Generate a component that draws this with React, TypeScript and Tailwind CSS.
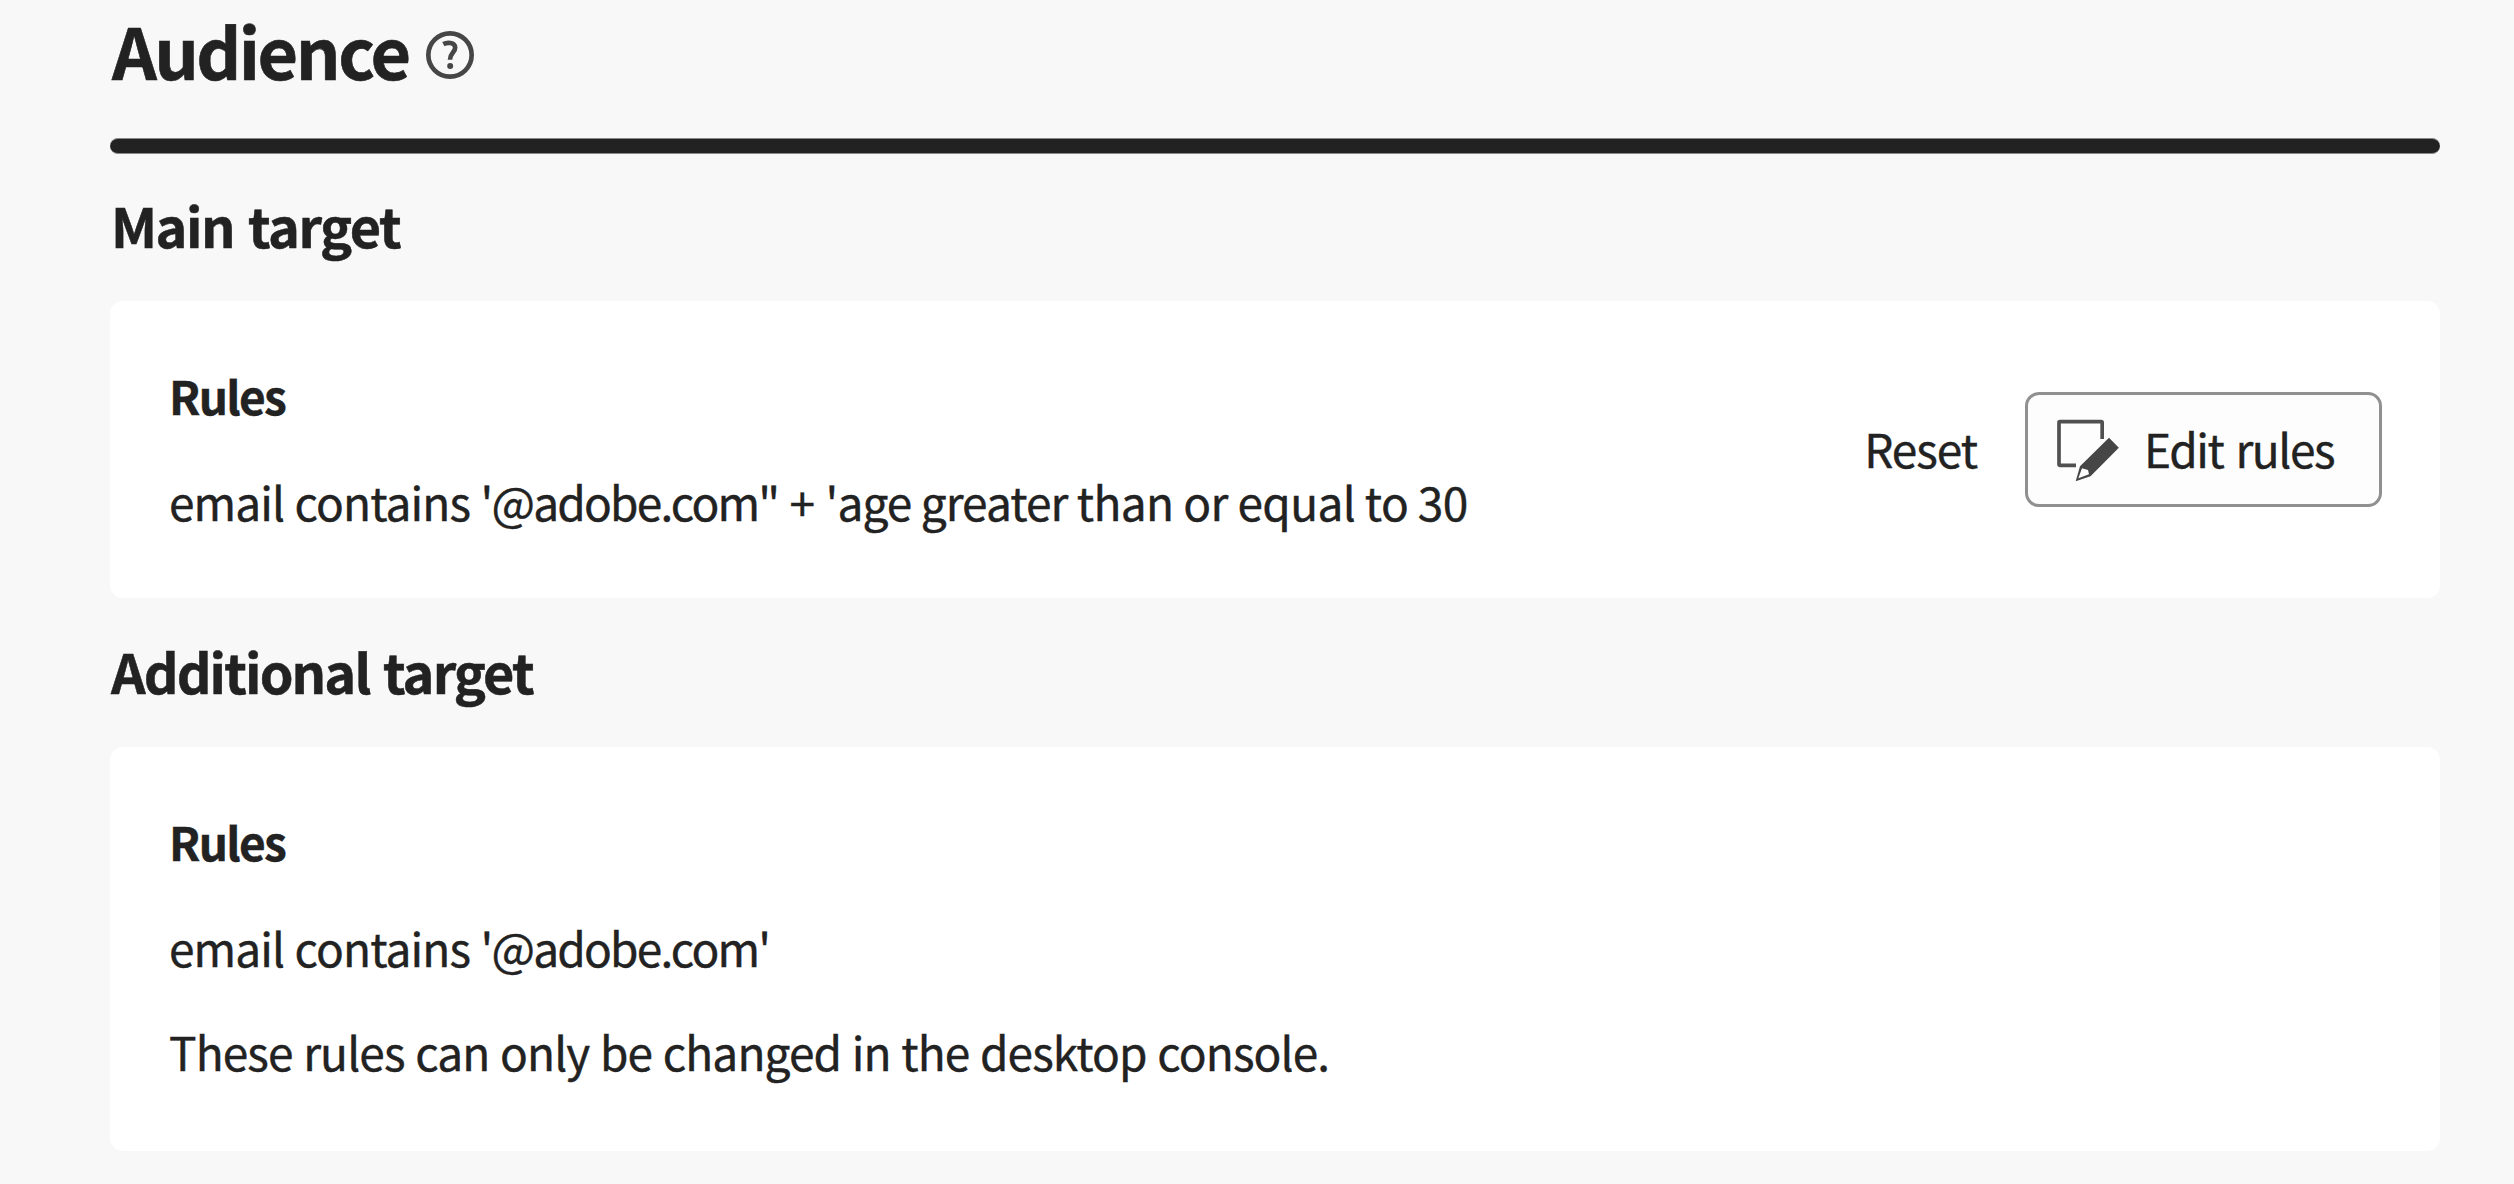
import type { ReactNode } from "react";

function HelpIcon() {
  return (
    <svg viewBox="14 29 150 150" className="mt-[9px] ml-4 h-[50px] w-[50px]" fill="none" stroke="#464646">
      <circle cx="89" cy="104" r="65" strokeWidth="14" />
      <path d="M69 71.5C80 65.5 104 65 104.500 81.500C105 96 89 98 89 118" strokeWidth="14" />
      <circle cx="89.500" cy="137" r="9" fill="#464646" stroke="none" />
    </svg>
  );
}

function EditIcon() {
  return (
    <svg viewBox="48 54 192 192" className="h-16 w-16 shrink-0" fill="#464646">
      <path
        d="M186.500 117V68Q186.500 65 183.500 65H60Q57 65 57 68V193Q57 196 60 196H108"
        fill="none"
        stroke="#505050"
        strokeWidth="11"
      />
      <path
        fillRule="evenodd"
        d="M207 113.500L236.500 143.500L151.500 229L107 243.500L120 199ZM126 205L115 234.500L147 223L144 210Z"
      />
    </svg>
  );
}

function Card({ children, className }: { children: ReactNode; className: string }) {
  return <div className={`mt-[46px] flex justify-between rounded-[13px] bg-white px-[58px] pt-16 ${className}`}>{children}</div>;
}

function RulesTitle() {
  return <h3 className="pl-[1px] font-bold tracking-[-1.7px]">Rules</h3>;
}

const body = "text-[46px] leading-[60px] whitespace-nowrap [-webkit-text-stroke:0.4px_#222222]";

export default function App() {
  return (
    <main className="h-[1184px] w-[2514px] overflow-hidden bg-[#f8f8f8] pt-[10px] pr-[74px] pl-[110px] font-['Noto_Sans_CJK_SC',sans-serif] text-[#222222]">
      <header className="flex h-20 items-center pl-[2px]">
        <h1 className="text-[70px] leading-[80px] font-bold tracking-[-2.5px] [-webkit-text-stroke:0.6px_#222222]">Audience</h1>
        <HelpIcon />
      </header>
      <div className="mt-12 h-4 rounded-full border-y border-[#8a8a8a] bg-[#222222]" />

      <section>
        <h2 className="mt-[41px] pl-[1px] text-[54px] leading-[60px] font-bold tracking-[-1.45px] [word-spacing:3px] [-webkit-text-stroke:0.5px_#222222]">
          Main target
        </h2>
        <Card className="h-[297px]">
          <div className={body}>
            <RulesTitle />
            <p className="mt-[46px] pl-[1px]">
              <span className="tracking-[-0.9px] [word-spacing:1px]">email contains </span>
              <span className="tracking-[-1.79px]">'@adobe.com"</span>
              <span className="tracking-[-0.62px] [word-spacing:1.5px]"> + </span>
              <span className="tracking-[-0.93px]">'age greater </span>
              <span className="tracking-[-0.62px]">than or equal to 30</span>
            </p>
          </div>
          <div className={`mt-[27px] flex h-[115px] items-center ${body}`}>
            <button className="mr-[48px] pb-1 tracking-[-1.05px]">Reset</button>
            <button className="flex h-[115px] w-[357px] items-center rounded-[14px] border-[3px] border-[#909090] bg-[#fdfdfd] pl-[28px]">
              <EditIcon />
              <span className="ml-6 pb-1 tracking-[-1.4px] [word-spacing:3px]">Edit rules</span>
            </button>
          </div>
        </Card>
      </section>

      <section>
        <h2 className="mt-[43px] pl-[1px] text-[54px] leading-[60px] font-bold tracking-[-1.85px] [word-spacing:3px] [-webkit-text-stroke:0.5px_#222222]">
          Additional target
        </h2>
        <Card className="h-[404px]">
          <div className={body}>
            <RulesTitle />
            <p className="mt-[46px] pl-[1px]">
              <span className="tracking-[-0.9px] [word-spacing:1px]">email contains </span>
              <span className="tracking-[-1.79px]">'@adobe.com'</span>
            </p>
            <p className="mt-[44px] pl-[1px] tracking-[-0.89px] [word-spacing:1.2px]">
              These rules can only be changed in the desktop console.
            </p>
          </div>
        </Card>
      </section>
    </main>
  );
}
